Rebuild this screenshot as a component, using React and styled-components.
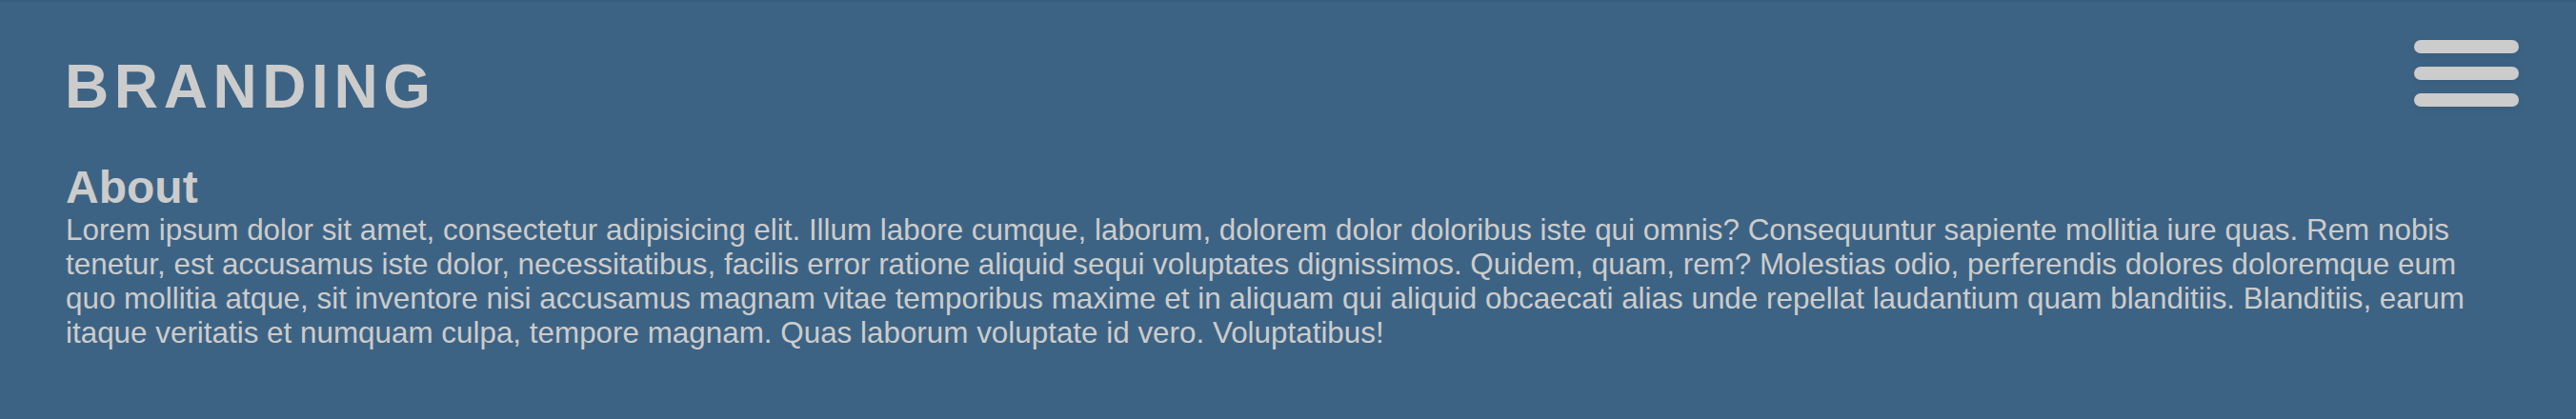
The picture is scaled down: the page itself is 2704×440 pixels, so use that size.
import React from "react";
import styled, { createGlobalStyle } from "styled-components";

const GlobalStyle = createGlobalStyle`
    * {
        box-sizing: border-box;
    }

    html,
    body {
        margin: 0;
        padding: 0;
        background-color: #3d6384;
    }

    body {
        font-family: "Liberation Sans", Arial, Helvetica, sans-serif;
        color: #cccccc;
    }
`;

// line breaks kept as in the design
const aboutLines = [
    "Lorem ipsum dolor sit amet, consectetur adipisicing elit. Illum labore cumque, laborum, dolorem dolor doloribus iste qui omnis? Consequuntur sapiente mollitia iure quas. Rem nobis",
    "tenetur, est accusamus iste dolor, necessitatibus, facilis error ratione aliquid sequi voluptates dignissimos. Quidem, quam, rem? Molestias odio, perferendis dolores doloremque eum",
    "quo mollitia atque, sit inventore nisi accusamus magnam vitae temporibus maxime et in aliquam qui aliquid obcaecati alias unde repellat laudantium quam blanditiis. Blanditiis, earum",
    "itaque veritatis et numquam culpa, tempore magnam. Quas laborum voluptate id vero. Voluptatibus!",
];

const App = () => {
    return (
        <>
            <GlobalStyle />
            <Page>
                <Header>
                    <Brand>BRANDING</Brand>
                    <MenuButton aria-label="Open menu">
                        <Bar />
                        <Bar />
                        <Bar />
                    </MenuButton>
                </Header>

                <Section>
                    <SectionTitle>About</SectionTitle>
                    <SectionText>
                        {aboutLines.map((line, i) => (
                            <React.Fragment key={i}>
                                {line}
                                {i < aboutLines.length - 1 && <br />}
                            </React.Fragment>
                        ))}
                    </SectionText>
                </Section>
            </Page>
        </>
    );
};

export default App;

const Page = styled.div`
    width: 100%;
    min-height: 440px;
    background-color: #3d6384;
    border-top: 2px solid #385c7b;
    padding: 0 60px 0 69px;
`;

const Header = styled.header`
    display: flex;
    justify-content: space-between;
    align-items: flex-start;
    padding-top: 40px;
`;

const Brand = styled.h1`
    margin: 12px 0 0 -1px;
    font-size: 64px;
    font-weight: 700;
    letter-spacing: 5.6px;
    line-height: normal;
    color: #cccccc;
`;

const MenuButton = styled.button`
    display: flex;
    flex-direction: column;
    gap: 14px;
    padding: 0;
    border: none;
    background: transparent;
    cursor: pointer;
`;

const Bar = styled.span`
    display: block;
    width: 110px;
    height: 14px;
    border-radius: 7px;
    background-color: #cccccc;
    box-shadow: 0 3px 10px rgba(0, 0, 0, 0.08);
`;

const Section = styled.section`
    margin-top: 41px;
`;

const SectionTitle = styled.h2`
    margin: 0;
    font-size: 48px;
    font-weight: 700;
    line-height: normal;
    color: #cccccc;
`;

const SectionText = styled.p`
    margin: 0;
    font-size: 31.4px;
    line-height: 36px;
    color: #cccccc;
`;
